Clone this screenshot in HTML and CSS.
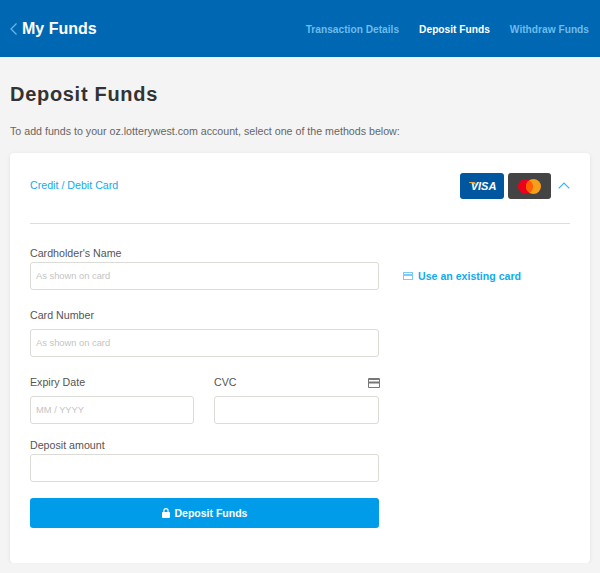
FILE: index.html
```html
<!DOCTYPE html>
<html lang="en">
<head>
  <meta charset="UTF-8" />
  <title>Deposit Funds</title>
  <link rel="stylesheet" href="styles.css">
</head>
<body>

<header class="topbar">
  <a class="back" href="#">
    <svg class="back-icon" width="7" height="12" viewBox="0 0 7 12"><path d="M6.500.500 1 6l5.500 5.500" /></svg>
    <span>My Funds</span>
  </a>
  <nav class="tabs">
    <a href="#">Transaction Details</a>
    <a class="active" href="#">Deposit Funds</a>
    <a href="#">Withdraw Funds</a>
  </nav>
</header>

<main class="page">
  <h1>Deposit Funds</h1>
  <p class="intro">To add funds to your oz.lotterywest.com account, select one of the methods below:</p>

  <section class="card">
    <div class="card-head">
      <span class="method">Credit / Debit Card</span>
      <div class="brands">
        <span class="brand visa">
          <span>VISA</span>
          <svg class="visa-tick" width="7" height="3" viewBox="0 0 7 3"><path d="M0 0h5.500q1 0 1.500 3Q5 1.300 0 .700z" /></svg>
        </span>
        <span class="brand mastercard">
          <svg width="23" height="15" viewBox="0 0 23 15">
            <circle cx="7.500" cy="7.500" r="7.500" fill="#eb001b" />
            <circle cx="15.500" cy="7.500" r="7.500" fill="#f79e1b" />
            <path d="M11.500 1.150a7.500 7.500 0 0 1 0 12.700 7.500 7.500 0 0 1 0-12.700z" fill="#ff5f00" />
          </svg>
        </span>
        <svg class="chevron" width="12" height="7" viewBox="0 0 12 7"><path d="M.700 6.300 6 1l5.300 5.300" /></svg>
      </div>
    </div>

    <div class="card-body">
      <form class="form">
        <div class="field">
          <label>Cardholder's Name</label>
          <input type="text" placeholder="As shown on card">
        </div>
        <div class="field field-wide">
          <label>Card Number</label>
          <input type="text" placeholder="As shown on card">
        </div>
        <div class="field-row">
          <div class="field field-wide">
            <label>Expiry Date</label>
            <input type="text" placeholder="MM / YYYY">
          </div>
          <div class="field field-wide">
            <label class="label-icon">CVC
              <svg width="12" height="10" viewBox="0 0 12 10"><path fill="#777" d="M1 0h10a1 1 0 0 1 1 1v8a1 1 0 0 1-1 1H1a1 1 0 0 1-1-1V1a1 1 0 0 1 1-1zm0 2v1.500h10V2zm0 3.500V9h10V5.500z" /></svg>
            </label>
            <input type="text">
          </div>
        </div>
        <div class="field field-last">
          <label>Deposit amount</label>
          <input type="text">
        </div>
        <button type="button" class="submit">
          <svg width="8" height="10" viewBox="0 0 9 11"><path fill="#fff" d="M1.500 4.500V3a3 3 0 0 1 6 0v1.500H8a1 1 0 0 1 1 1V10a1 1 0 0 1-1 1H1a1 1 0 0 1-1-1V5.500a1 1 0 0 1 1-1zm1.300 0h3.400V3a1.700 1.700 0 0 0-3.400 0z" /></svg>
          Deposit Funds
        </button>
      </form>

      <a class="existing" href="#">
        <svg width="10" height="8" viewBox="0 0 10 8"><path fill="#7ccdf3" d="M0 0h10v8H0zm1 1v1h8V1zm0 3v3h8V4z" /></svg>
        Use an existing card
      </a>
    </div>
  </section>
</main>

</body>
</html>
```

FILE: styles.css
```css
* { box-sizing: border-box; }
body {
  margin: 0;
  background: #f4f4f4;
  font-family: 'Liberation Sans', Arial, sans-serif;
  color: #555;
  overflow: hidden;
}

a { text-decoration: none; }

.topbar {
  height: 57px;
  background: #0067b3;
  padding: 0 11px 0 10px;
  display: flex;
  justify-content: space-between;
  align-items: center;
}

.back {
  display: flex;
  align-items: center;
  gap: 5px;
  color: #fff;
  font-size: 16px;
  font-weight: bold;
}

.back-icon path {
  fill: none;
  stroke: #6db8e8;
  stroke-width: 1.200;
}

.tabs {
  display: flex;
  gap: 20px;
  padding-top: 2px;
  font-size: 10.200px;
  font-weight: bold;
}

.tabs a { color: #6cbcec; }
.tabs a.active { color: #fff; }

.page { padding: 0 10px; }

h1 {
  margin: 25px 0 0;
  font-size: 20px;
  line-height: 25px;
  letter-spacing: .7px;
  color: #333;
}

.intro {
  margin: 18px 0 0;
  font-size: 10.670px;
  line-height: 13px;
  color: #666;
}

.card {
  margin-top: 15px;
  height: 410px;
  background: #fff;
  border-radius: 4px;
  padding: 0 20px;
  box-shadow: 0 1px 4px rgba(0, 0, 0, .08);
}

.card-head {
  height: 71px;
  padding-top: 20px;
  border-bottom: 1px solid #ddd;
  display: flex;
  justify-content: space-between;
  align-items: flex-start;
}

.method {
  margin-top: 6px;
  font-size: 10.670px;
  line-height: 13px;
  color: #0fabf0;
}

.brands {
  display: flex;
  align-items: center;
  gap: 4px;
}

.brand {
  width: 44px;
  height: 26px;
  border-radius: 3px;
  display: flex;
  justify-content: center;
  align-items: center;
}

.visa {
  position: relative;
  padding-left: 3px;
  background: #00579f;
  color: #fff;
  font-size: 11px;
  font-weight: bold;
  font-style: italic;
}

.visa-tick {
  position: absolute;
  top: 9px;
  left: 9px;
  fill: #f9a533;
}

.mastercard {
  width: 43px;
  background: #444;
}

.chevron {
  margin: -2px 0 0 3px;
  fill: none;
  stroke: #35b4ee;
  stroke-width: 1.200;
}

.card-body {
  display: flex;
  gap: 24px;
}

.form {
  width: 349px;
  padding-top: 23px;
}

.field { margin-bottom: 19px; }

.field label {
  display: block;
  margin-bottom: 2px;
  font-size: 10.670px;
  line-height: 13px;
  color: #555;
}

.field-wide label { margin-bottom: 7px; }

.field-row .field { margin-bottom: 15px; }

.field-last { margin-bottom: 16px; }

.label-icon {
  display: flex !important;
  justify-content: space-between;
  align-items: center;
  margin-right: -1px;
}

.field input {
  display: block;
  width: 100%;
  height: 28px;
  padding: 0 5px;
  background: #fff;
  border: 1px solid #dcdcd6;
  border-radius: 3px;
  font-family: inherit;
  font-size: 9.330px;
}

.field input::placeholder { color: #c4c4c4; }

.field-row {
  display: grid;
  grid-template-columns: 164px 165px;
  gap: 20px;
}

.submit {
  width: 100%;
  height: 30px;
  background: #009cea;
  border: 0;
  border-radius: 3px;
  color: #fff;
  font-family: inherit;
  font-size: 10.500px;
  font-weight: bold;
  display: flex;
  justify-content: center;
  align-items: center;
  gap: 5px;
}

.existing {
  margin-top: 45px;
  height: 13px;
  display: flex;
  align-items: center;
  gap: 5px;
  color: #0fabf0;
  font-size: 10.600px;
  font-weight: bold;
}
```
